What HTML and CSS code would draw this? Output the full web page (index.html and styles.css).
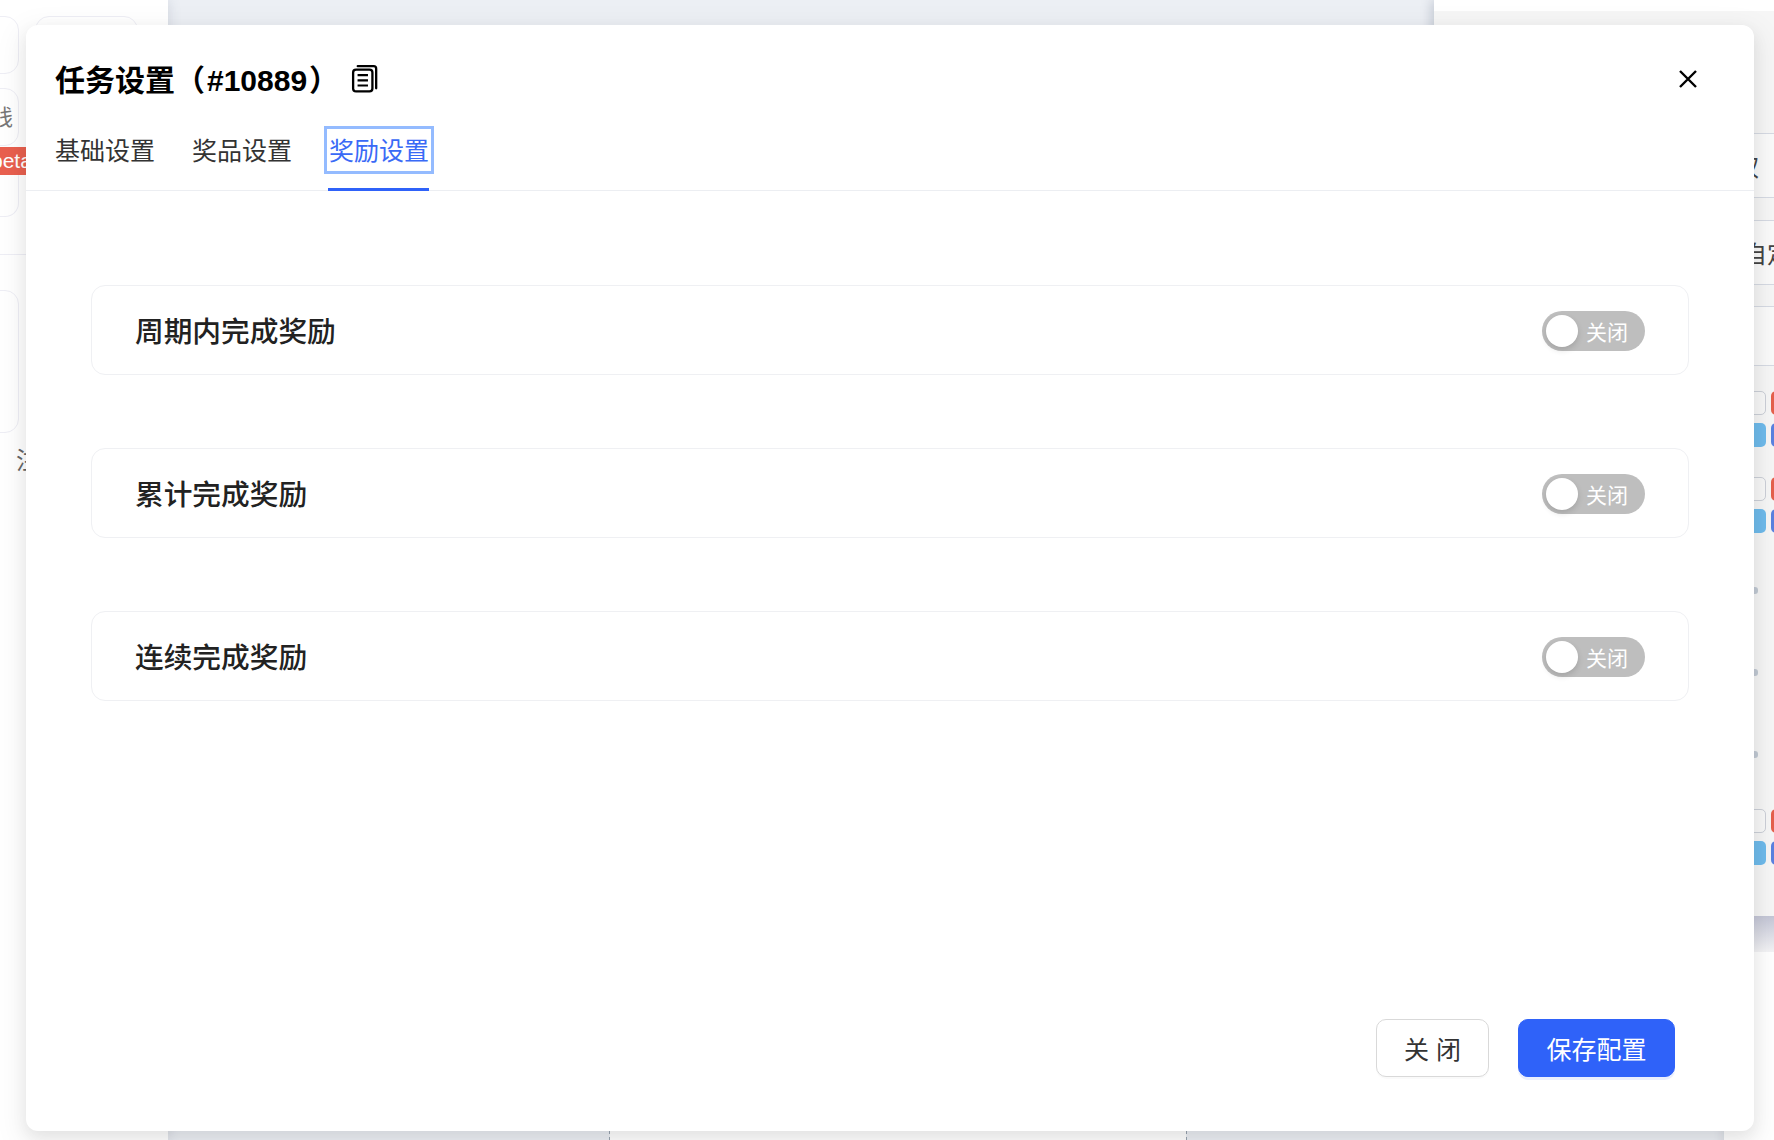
FILE: index.html
```html
<!DOCTYPE html>
<html lang="zh-CN">
<head>
<meta charset="utf-8">
<title>任务设置</title>
<link rel="stylesheet" href="styles.css">
</head>
<body>
<div class="page">
  <aside class="side">
    <div class="side-top">
      <div class="card card-a"></div>
      <div class="card card-b"></div>
    </div>
    <div class="card card-c"><span class="card-label">游戏线</span></div>
    <div class="beta"><span>beta</span></div>
    <div class="card card-d"></div>
    <div class="side-rule"></div>
    <div class="card card-e"></div>
    <div class="side-note">注</div>
  </aside>
  <main class="center">
    <div class="strip">
      <div class="strip-grey strip-1"></div>
      <div class="strip-white"></div>
      <div class="strip-grey strip-2"></div>
    </div>
  </main>
</div>

<section class="drawer">
  <div class="drawer-body">
    <div class="d-head"></div>
    <div class="d-row d-row-1"><span>权</span></div>
    <div class="d-row d-row-2"><span>自定义</span></div>
    <div class="d-row d-row-3"></div>
    <div class="d-cells d-cells-1">
      <div class="cell-line"><i class="c-outline"></i><i class="c-red"></i></div>
      <div class="cell-line"><i class="c-sky"></i><i class="c-blue"></i></div>
    </div>
    <div class="d-cells d-cells-2">
      <div class="cell-line"><i class="c-outline"></i><i class="c-red"></i></div>
      <div class="cell-line"><i class="c-sky"></i><i class="c-blue"></i></div>
    </div>
    <div class="d-dots">
      <i class="dot"></i><i class="dot"></i><i class="dot"></i>
    </div>
    <div class="d-cells d-cells-3">
      <div class="cell-line"><i class="c-outline"></i><i class="c-red"></i></div>
      <div class="cell-line"><i class="c-sky"></i><i class="c-blue"></i></div>
    </div>
  </div>
  <div class="drawer-fade"></div>
</section>

<div class="modal" role="dialog">
  <header class="modal-head">
    <h1 class="modal-title">任务设置（<span class="title-id">#10889</span>）</h1>
    <svg class="copy-icon" width="27" height="29" viewBox="0 0 28 30" fill="none" stroke="#000" stroke-width="2.4">
      <path d="M7 2.2h16.5a2.6 2.6 0 0 1 2.6 2.6v20.4" stroke-linecap="round"/>
      <rect x="2.2" y="5.8" width="20" height="22.6" rx="3"/>
      <path d="M6.8 11.5h10.8M6.8 16.9h10.8M6.8 22.3h10.8" stroke-width="2.2"/>
    </svg>
    <svg class="close-icon" width="18" height="18" viewBox="0 0 18 18" fill="none" stroke="#000" stroke-width="2.4">
      <path d="M1 1l16 16M17 1L1 17"/>
    </svg>
  </header>
  <nav class="tabs">
    <a class="tab">基础设置</a>
    <a class="tab">奖品设置</a>
    <a class="tab tab-active"><span class="tab-focus">奖励设置</span></a>
  </nav>
  <div class="modal-body">
    <div class="reward-row">
      <span class="reward-name">周期内完成奖励</span>
      <span class="switch"><i class="knob"></i><span class="switch-text">关闭</span></span>
    </div>
    <div class="reward-row">
      <span class="reward-name">累计完成奖励</span>
      <span class="switch"><i class="knob"></i><span class="switch-text">关闭</span></span>
    </div>
    <div class="reward-row">
      <span class="reward-name">连续完成奖励</span>
      <span class="switch"><i class="knob"></i><span class="switch-text">关闭</span></span>
    </div>
  </div>
  <footer class="modal-foot">
    <button class="btn btn-plain">关 闭</button>
    <button class="btn btn-primary">保存配置</button>
  </footer>
</div>
</body>
</html>
```
FILE: styles.css
```css
* { box-sizing: border-box; }
html, body { margin: 0; height: 100%; overflow: hidden; background: #fff; }
body {
  position: relative;
  width: 1774px;
  height: 1140px;
  font-family: "Liberation Sans", "Noto Sans CJK SC", sans-serif;
  color: #333;
}
.page { display: flex; height: 1140px; }

/* left sidebar behind the modal */
.side {
  position: relative;
  z-index: 1;
  width: 168px;
  flex: none;
  background: #fff;
  padding-top: 16px;
  overflow: hidden;
  box-shadow: 0 0 12px rgba(80, 90, 120, .18);
}
.side-top { display: flex; gap: 16px; height: 58px; }
.card { border: 1px solid #eeeef5; border-radius: 14px; }
.card-a { width: 60px; height: 58px; margin-left: -41px; flex: none; }
.card-b { width: 103px; height: 80px; flex: none; }
.card-c {
  width: 60px; height: 58px; margin: 14px 0 0 -41px;
  display: flex; align-items: center; justify-content: flex-end;
  padding: 0 5px 4px 0;
  white-space: nowrap;
  font-size: 22px; color: #777;
}
.beta {
  height: 28px; margin-top: 1px; background: #e9604f; color: #fff;
  font-size: 21px; line-height: 28px; width: 30px; overflow: hidden;
}
.beta span { display: block; margin-left: -9px; }
.card-d { width: 60px; height: 42px; margin-left: -41px; border-top: none; border-radius: 0 0 14px 14px; }
.side-rule { height: 1px; margin-top: 37px; background: #eeeef5; }
.card-e { width: 60px; height: 143px; margin: 35px 0 0 -41px; }
.side-note { margin: 13px 0 0 16px; font-size: 24px; line-height: 30px; color: #666; }

/* centre page behind the modal */
.center {
  flex: none;
  width: 1556px;
  height: 1140px;
  background: linear-gradient(#eceff4 0 25px, #fff 25px);
  display: flex;
  flex-direction: column;
  justify-content: flex-end;
}
.strip { display: flex; height: 9px; }
.strip-grey { background: #eceff4; }
.strip-1 { width: 442px; border-right: 1px dashed #98a4b0; }
.strip-white { width: 576px; background: #fff; }
.strip-2 { flex: 1; border-left: 1px dashed #98a4b0; box-shadow: inset -12px 0 10px -10px rgba(90, 100, 120, .12); }

/* right drawer behind the modal */
.drawer {
  position: absolute;
  left: 1434px;
  top: 0;
  width: 340px;
  z-index: 2;
}
.drawer-body {
  height: 916px;
  padding-top: 11px;
  padding-left: 300px;
  background: linear-gradient(#fff 0 11px, #f6f6f6 11px);
  box-shadow: -3px 0 10px rgba(70, 80, 110, .22);
  overflow: hidden;
}
.d-head { height: 122px; }
.d-row {
  border-top: 1px solid #d6dae3;
  border-bottom: 1px solid #d6dae3;
  background: #fafafa;
  font-size: 24px;
  color: #444;
  white-space: nowrap;
  display: flex;
  align-items: center;
}
.d-row-1 { height: 65px; margin-left: -300px; padding-left: 301px; }
.d-row-2 { height: 65px; margin: 22px 0 0 -300px; padding-left: 309px; }
.d-row-3 { height: 60px; margin: 21px 0 0 -300px; }
.d-cells { display: flex; flex-direction: column; gap: 8px; }
.d-cells-1 { margin-top: 25px; }
.d-cells-2 { margin-top: 30px; }
.d-cells-3 { margin-top: 51px; }
.cell-line { display: flex; gap: 5px; height: 24px; }
.cell-line i { display: block; flex: none; height: 24px; border-radius: 5px; }
.c-outline { width: 32px; background: #f8f8f8; border: 1px solid #ccd0d8; }
.c-red { width: 30px; background: #e5604c; }
.c-sky { width: 32px; background: #6fbbec; }
.c-blue { width: 30px; background: #5a82e0; }
.d-dots { display: flex; flex-direction: column; gap: 75px; margin-top: 54px; padding-left: 4px; }
.dot { display: block; width: 20px; height: 7px; border-radius: 3px; background: #c2cad4; }
.drawer-fade { height: 36px; background: linear-gradient(#c4c6d6, #f3f3f5); }

/* modal */
.modal {
  position: absolute;
  left: 26px;
  top: 25px;
  width: 1728px;
  height: 1106px;
  z-index: 3;
  background: #fff;
  border-radius: 12px;
  display: flex;
  flex-direction: column;
  box-shadow: 0 6px 16px rgba(0, 0, 0, .07), 0 9px 28px 8px rgba(0, 0, 0, .05);
}
.modal-head {
  display: flex;
  align-items: center;
  height: 42px;
  margin-top: 33px;
  padding: 0 57px 0 29px;
}
.modal-title {
  margin: 3px 0 0;
  font-size: 30px;
  line-height: 42px;
  font-weight: 700;
  color: #000;
  white-space: nowrap;
}
.title-id { margin: 0 2px; }
.copy-icon { margin: -1px 0 0 12px; flex: none; }
.close-icon { margin-left: auto; flex: none; }
.tabs {
  display: flex;
  gap: 37px;
  height: 60px;
  margin-top: 31px;
  padding-left: 29px;
  border-bottom: 1px solid #eceef2;
}
.tab {
  height: 60px;
  padding-bottom: 19px;
  border-bottom: 3px solid transparent;
  font-size: 25px;
  line-height: 40px;
  color: #333;
  white-space: nowrap;
}
.tab-active { margin-left: -1px; padding-left: 1px; color: #3a6af6; border-bottom-color: #2f62f9; }
.tab-focus { display: block; height: 38px; outline: 3px solid #94bbff; outline-offset: 2px; }
.modal-body {
  display: flex;
  flex-direction: column;
  gap: 73px;
  padding: 94px 65px 0;
}
.reward-row {
  height: 90px;
  display: flex;
  align-items: center;
  justify-content: space-between;
  padding: 0 43px;
  border: 1px solid #eff0f3;
  border-radius: 14px;
  background: #fff;
}
.reward-name { font-size: 28.7px; font-weight: 500; color: #222; margin-top: -2px; }
.switch {
  display: flex;
  align-items: center;
  width: 103px;
  height: 40px;
  margin-top: 1px;
  padding: 0 4px;
  border-radius: 20px;
  background: #bebebe;
}
.knob {
  display: block;
  width: 32px;
  height: 32px;
  flex: none;
  border-radius: 50%;
  background: #fff;
  box-shadow: 0 3px 6px rgba(0, 0, 0, .14);
}
.switch-text { margin-left: 8px; font-size: 21px; color: #fff; white-space: nowrap; }
.modal-foot {
  display: flex;
  justify-content: flex-end;
  gap: 29px;
  margin-top: auto;
  padding: 0 79px 54px 0;
}
.btn {
  height: 58px;
  border-radius: 10px;
  font-family: inherit;
  font-size: 25px;
  padding: 0;
  cursor: pointer;
}
.btn-plain {
  width: 113px;
  background: #fff;
  border: 1px solid #d9d9d9;
  color: #333;
  box-shadow: 0 2px 0 rgba(0, 0, 0, .02);
}
.btn-primary {
  width: 157px;
  background: #2f62f9;
  border: 1px solid #2f62f9;
  color: #fff;
  box-shadow: 0 3px 0 rgba(47, 98, 249, .1);
}
```
